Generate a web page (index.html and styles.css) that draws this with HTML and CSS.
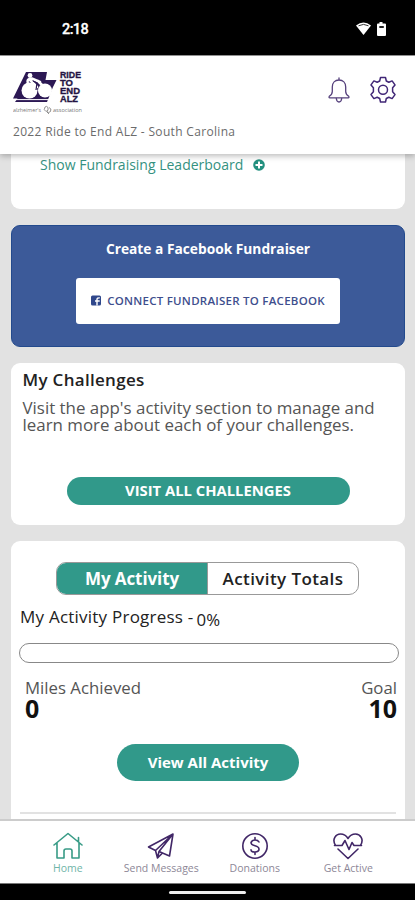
FILE: index.html
```html
<!DOCTYPE html>
<html lang="en">
<head>
<meta charset="utf-8">
<meta name="viewport" content="width=device-width, initial-scale=1">
<title>Ride to End ALZ</title>
<link rel="stylesheet" href="styles.css">
</head>
<body>
<div class="phone">
  <div class="status">
    <span class="clock">2:18</span>
    <svg class="status-icons" width="34" height="16" viewBox="0 0 34 16">
      <path d="M1 4.500Q8.500-1.500 16 4.500L8.500 14Z" fill="#fff"/>
      <path d="M3.500 4.800Q8.500 2 13.500 4.800" fill="none" stroke="#333" stroke-width="1"/>
      <path d="M24.500 1h3v1.500h2.500q1 0 1 1v10.500q0 1-1 1h-7q-1 0-1-1V3.500q0-1 1-1h1.500z" fill="#fff"/>
      <path d="M24.300 5h4.500v2h-4.500z" fill="#222"/>
    </svg>
  </div>
  <header class="header">
    <div class="header-row">
      <svg class="logo" width="72" height="45" viewBox="0 0 72 45">
        <path d="M13 2H34L32.500 10H43.500L40 17 34 32H2L4.500 28.500H0Z" fill="#2c1854"/>
        <circle cx="16.500" cy="20.500" r="8" fill="#fff"/>
        <circle cx="32" cy="20.500" r="7" fill="#fff"/>
        <circle cx="17" cy="5.500" r="2.400" fill="#fff"/>
        <path d="M15 14Q13 8.500 19 8.500L27 12M17 10L24 17M25 11L32 18" fill="none" stroke="#fff" stroke-width="2.600" stroke-linecap="round"/>
        <path d="M20 11L24 13L23 20" fill="none" stroke="#2c1854" stroke-width="1.200"/>
        <path d="M1 29.600H36" stroke="#fff" stroke-width="1"/>
        <g class="logo-name">
          <text x="47" y="8.400" textLength="21" lengthAdjust="spacingAndGlyphs">RIDE</text>
          <text x="47" y="16.200" textLength="13" lengthAdjust="spacingAndGlyphs">TO</text>
          <text x="47" y="24.100" textLength="20" lengthAdjust="spacingAndGlyphs">END</text>
          <text x="47" y="32" textLength="18" lengthAdjust="spacingAndGlyphs">ALZ</text>
        </g>
        <g class="logo-org">
          <text x="0" y="42" textLength="28" lengthAdjust="spacingAndGlyphs">alzheimer's</text>
          <text x="40" y="42" textLength="29" lengthAdjust="spacingAndGlyphs">association</text>
        </g>
        <path d="M32 37q-2 3 1 4.500q3-.5 2-4q-1.500-2-3-.5M36 37.500q3 1 1.500 4q-2 2-3.500 0M34 42l2 2" fill="none" stroke="#777" stroke-width=".8"/>
      </svg>
      <div class="actions">
        <svg width="24" height="28" viewBox="0 0 24 28" fill="none" stroke="#55407c" stroke-width="1.300" stroke-linecap="round" stroke-linejoin="round">
          <path d="M12 2v2M12 4C8 4 5.300 6.800 5.300 11v4.500c0 2.400-.8 3.500-3 4.800q-.7 1.500.5 1.500h18.400q1.200 0 .5-1.500c-2.200-1.300-3-2.400-3-4.800V11C18.700 6.800 16 4 12 4z"/>
          <path d="M9.300 22.500q.4 3.500 2.700 3.500t2.700-3.500"/>
        </svg>
        <svg width="28" height="28" viewBox="0 0 28 28" fill="none" stroke="#412777" stroke-width="1.500" stroke-linejoin="round">
          <path d="M11.500 1.500h5l.8 3.500 2.500 1.200 3.300-1.300 2.900 4-2.400 2.900v4l2.400 2.800-2.900 4-3.300-1.300-2.500 1.200-.8 3.500h-5l-.8-3.500-2.500-1.200-3.300 1.300-2.900-4L4.400 15.800v-4L2 8.900l2.900-4 3.300 1.300 2.500-1.200z"/>
          <circle cx="14" cy="13.800" r="4.500"/>
        </svg>
      </div>
    </div>
    <div class="event">2022 Ride to End ALZ - South Carolina</div>
  </header>
  <main class="content">
    <section class="card leaderboard">
      <span class="leader-text">Show Fundraising Leaderboard</span>
      <svg width="12" height="12" viewBox="0 0 12 12"><circle cx="6" cy="6" r="5.800" fill="#23907f"/><path d="M6 2.500v7M2.500 6h7" stroke="#fff" stroke-width="2"/></svg>
    </section>
    <section class="card facebook">
      <h2 class="fb-title"><span>Create a Facebook Fundraiser</span></h2>
      <div class="fb-button">
        <svg width="10" height="11" viewBox="0 0 10 11"><rect y=".5" width="10" height="10" rx="1.500" fill="#2f478b"/><path d="M6 10.500V4.300Q6 2.700 8.800 2.900M4 6h4.700" fill="none" stroke="#fff" stroke-width="1.400"/></svg>
        <span class="fb-label">CONNECT FUNDRAISER TO FACEBOOK</span>
      </div>
    </section>
    <section class="card challenges">
      <h2 class="ch-title"><span>My Challenges</span></h2>
      <p class="ch-text"><span>Visit the app's activity section to manage and</span><br><span>learn more about each of your challenges.</span></p>
      <div class="ch-button"><span>VISIT ALL CHALLENGES</span></div>
    </section>
    <section class="card activity">
      <div class="tabs">
        <div class="tab active"><span>My Activity</span></div>
        <div class="tab"><span>Activity Totals</span></div>
      </div>
      <div class="progress-label"><span class="progress-name">My Activity Progress -</span><span class="percent">0%</span></div>
      <div class="progress"></div>
      <div class="stats">
        <div class="stat"><span class="stat-name">Miles Achieved</span><strong>0</strong></div>
        <div class="stat right"><span class="stat-name">Goal</span><strong>10</strong></div>
      </div>
      <div class="view-button"><span>View All Activity</span></div>
      <div class="divider"></div>
    </section>
  </main>
  <nav class="nav">
    <div class="nav-item home">
      <svg width="30" height="28" viewBox="0 0 30 28"><path d="M1 13L15 1.500 29 13M4 11v15h7v-7q0-2 2-2h4q2 0 2 2v7h7V11M25.500 5.500V10"/></svg>
      <span>Home</span>
    </div>
    <div class="nav-item send">
      <svg width="28" height="28" viewBox="0 0 28 28"><path d="M26 2L1.500 15l7 3.500L26 2l-3.500 22-7-3L10.500 26 8.500 18.500M26 2L12 19.500 10.500 26M12 19.500l3.500 1.500"/></svg>
      <span>Send Messages</span>
    </div>
    <div class="nav-item donate">
      <svg width="28" height="28" viewBox="0 0 28 28"><circle cx="14" cy="14" r="12.200"/><path d="M18 10q-1-2-4-2t-4 2.600q0 2.200 4 3.200t4 3.500-4 2.700-4-2.200M14 5.500V8M14 20v2.500"/></svg>
      <span>Donations</span>
    </div>
    <div class="nav-item get-active">
      <svg width="32" height="28" viewBox="0 0 32 28"><path d="M3.500 13.500C-.5 7 4 2 8.500 2c3.500 0 6 2 7.500 4.500C17.500 4 20 2 23.500 2 28 2 32.500 7 28.500 13.500M2.500 13.500H10l3-5 4 9 3-7 2 3h7.500M6 17l10 9.500L26 17"/></svg>
      <span>Get Active</span>
    </div>
  </nav>
  <div class="gesture"><div class="handle"></div></div>
</div>
</body>
</html>
```
FILE: styles.css
```css
* { box-sizing: border-box; }
body { margin: 0; font-family: "Open Sans", sans-serif; color: #222; }
h2, p { margin: 0; }
span { white-space: nowrap; }
.phone { width: 415px; height: 900px; display: flex; flex-direction: column; overflow: hidden; background: #e2e2e2; }
.status { height: 56px; flex: none; background: #000; border-bottom: 1px solid #999; padding: 21px 26px 0 62px; display: flex; justify-content: space-between; }
.clock { font: 500 14.500px/18px Roboto, sans-serif; color: #fff; letter-spacing: -.6px; -webkit-text-stroke: .3px #fff; }
.header { height: 98px; flex: none; background: #fff; padding: 14px 18px 0 13px; box-shadow: 0 2px 6px rgba(0,0,0,.27); z-index: 1; }
.header-row { height: 52px; display: flex; justify-content: space-between; }
.logo-name { font: bold 8.500px "Liberation Sans", sans-serif; fill: #241443; stroke: #241443; stroke-width: .3px; }
.logo-org { font: 5.500px "Open Sans", sans-serif; fill: #777; }
.actions { display: flex; gap: 18px; padding-top: 6px; }
.event { font-size: 12px; line-height: 20px; color: #6b6b6b; letter-spacing: .32px; }
.content { height: 665px; flex: none; padding: 0 10px 0 11px; display: flex; flex-direction: column; gap: 16px; overflow: hidden; }
.card { background: #fff; border-radius: 9px; flex: none; }
.leaderboard { height: 55px; border-radius: 0 0 9px 9px; display: flex; align-items: flex-start; gap: 10px; padding-left: 29px; color: #35917f; }
.leader-text { font-size: 14px; line-height: 22px; }
.leaderboard svg { margin-top: 5px; }
.facebook { height: 122px; background: #3c5a99; border: 1px solid #234a8d; padding-top: 12px; display: flex; flex-direction: column; align-items: center; gap: 18px; }
.fb-title { font-size: 13.750px; line-height: 22px; color: #fff; }
.fb-button { width: 264px; height: 46px; border-radius: 3px; background: #fff; display: flex; align-items: center; justify-content: center; gap: 6px; padding-bottom: 1px; }
.fb-label { font-size: 11.500px; font-weight: 600; color: #3e4e8d; letter-spacing: .25px; }
.challenges { height: 162px; padding: 6px 11.500px; }
.ch-title { font-size: 17px; line-height: 22px; font-weight: 600; letter-spacing: .3px; }
.ch-text { margin-top: 8px; font-size: 16.900px; line-height: 17px; color: #555; }
.ch-button { width: 283px; height: 28px; margin: 44px 0 0 44px; border-radius: 14px; background: #31998a; color: #fff; font-size: 14.800px; line-height: 27px; font-weight: 700; text-align: center; }
.activity { height: 278px; border-radius: 9px 9px 0 0; padding: 21px 6px 0 8px; }
.tabs { width: 303px; height: 33px; margin-left: 37px; display: flex; border: 1px solid #999; border-radius: 10px; overflow: hidden; font-size: 17px; line-height: 31px; font-weight: 600; text-align: center; letter-spacing: .4px; }
.tab { flex: 1; }
.tab.active { background: #31998a; color: #fff; border-right: 1px solid #999; font-weight: 700; letter-spacing: -.1px; }
.progress-label { margin: 11px 0 0 1px; height: 24px; display: flex; gap: 3px; font-size: 17px; line-height: 22px; }
.progress-name { letter-spacing: .23px; }
.percent { font-size: 16.800px; padding-top: 3px; }
.progress { height: 20px; margin-top: 13px; border: 1px solid #888; border-radius: 10px; }
.stats { display: flex; justify-content: space-between; padding: 14px 2px 0 6px; }
.stat { display: flex; flex-direction: column; }
.stat.right { align-items: flex-end; }
.stat-name { font-size: 16.800px; line-height: 21px; color: #555; }
.stat strong { font-size: 25px; line-height: 21px; color: #111; }
.view-button { width: 182px; height: 37px; margin: 25px 0 0 98px; border-radius: 19px; background: #31998a; color: #fff; font-size: 15px; line-height: 37px; font-weight: 700; text-align: center; }
.divider { height: 2px; margin: 31px 3px 0 1px; background: #e2e2e2; }
.nav { height: 64px; flex: none; background: #fff; border-top: 2px solid #ccc; padding: 11px 20px 0 21px; display: grid; grid-template-columns: repeat(4, 1fr); }
.nav-item { display: flex; flex-direction: column; align-items: center; gap: 1px; font-size: 10.500px; line-height: 14px; color: #8d8797; }
.nav-item svg { fill: none; stroke: #412767; stroke-width: 1.600; stroke-linejoin: round; stroke-linecap: round; }
.nav-item.home { color: #70b5a8; }
.nav-item.home svg { stroke: #389b86; }
.gesture { height: 17px; flex: none; background: #000; border-top: 1px solid #777; padding-top: 7px; }
.handle { width: 77px; height: 3px; margin: 0 auto; border-radius: 2px; background: #eee; }
```
